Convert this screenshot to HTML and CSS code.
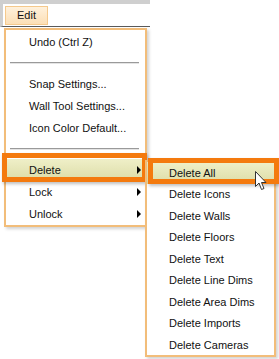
FILE: index.html
```html
<!DOCTYPE html>
<html lang="en">

<head>
    <meta charset="UTF-8">
    <title>Edit menu</title>
    <link rel="stylesheet" href="styles.css">
</head>

<body>
    <div class="screen">
        <div class="menubar">
            <div class="menu-title">Edit</div>
        </div>

        <div class="menu main-menu">
            <div class="item">Undo (Ctrl Z)</div>
            <div class="sep"></div>
            <div class="item">Snap Settings...</div>
            <div class="item">Wall Tool Settings...</div>
            <div class="item">Icon Color Default...</div>
            <div class="sep"></div>
            <div class="item has-sub marked">Delete<span class="arrow"></span></div>
            <div class="item has-sub">Lock<span class="arrow"></span></div>
            <div class="item has-sub">Unlock<span class="arrow"></span></div>
        </div>

        <div class="menu sub-menu">
            <div class="item marked">Delete All</div>
            <div class="item">Delete Icons</div>
            <div class="item">Delete Walls</div>
            <div class="item">Delete Floors</div>
            <div class="item">Delete Text</div>
            <div class="item">Delete Line Dims</div>
            <div class="item">Delete Area Dims</div>
            <div class="item">Delete Imports</div>
            <div class="item">Delete Cameras</div>
        </div>

        <svg class="cursor" width="12" height="20" viewBox="0 0 12 20">
            <path d="M0.5 0.5 L0.5 15.5 L4 12 L6.5 18.5 L9 17.5 L6.5 11.5 L11 11.5 Z" fill="#fff" stroke="#333"
                stroke-width="1" />
        </svg>
    </div>
</body>

</html>
```

FILE: styles.css
```css
body {
    margin: 0;
    background: #fff;
    font-family: 'Liberation Sans', Arial, sans-serif;
    font-size: 11px;
    color: #111;
}

.screen {
    position: relative;
    width: 279px;
    height: 359px;
    overflow: hidden;
}

.menubar {
    width: 145px;
    height: 22px;
    border-top: 4px solid #cfcfcf;
    border-left: 3px solid #cfcfcf;
    border-bottom: 1px solid #5a5a5a;
    padding: 2px 0 0 2px;
    box-sizing: content-box;
    height: 20px;
}

.menu-title {
    width: 41px;
    height: 17px;
    border: 1px solid #f5c98c;
    background: linear-gradient(#fff1dc, #fcdfb6);
    padding-left: 11px;
    line-height: 17px;
    box-sizing: content-box;
    width: 30px;
}

.menu {
    position: absolute;
    background: #fff;
    border: 2px solid #f2bd7a;
    box-sizing: border-box;
    box-shadow: 2px 2px 3px rgba(0, 0, 0, 0.18);
}

.main-menu {
    left: 4px;
    top: 28px;
    width: 143px;
    padding-top: 1px;
}

.sub-menu {
    left: 145px;
    top: 160px;
    width: 131px;
    height: 197px;
}

.item {
    position: relative;
    display: flex;
    align-items: center;
    justify-content: space-between;
    height: 22px;
    padding: 0 4px 0 23px;
}

.sub-menu .item {
    height: 21.5px;
    padding-left: 22px;
}

.sep {
    height: 20px;
    display: flex;
    align-items: center;
    padding: 0 6px 0 4px;
}

.sep::before {
    content: "";
    flex: 1;
    height: 1px;
    background: #9a9a9a;
    border-bottom: 1px solid #e4e4e4;
}

.arrow {
    width: 0;
    height: 0;
    border-top: 4px solid transparent;
    border-bottom: 4px solid transparent;
    border-left: 4px solid #000;
}

.marked {
    background: linear-gradient(#efefc8, #dcdca6);
}

.marked::after {
    content: "";
    position: absolute;
    border: 5px solid #f47a0e;
    box-shadow: 1px 2px 3px rgba(0, 0, 0, 0.25);
    pointer-events: none;
}

.main-menu .marked::after {
    left: -4px;
    top: -6px;
    right: -2px;
    bottom: -1px;
}

.sub-menu .marked::after {
    left: 1px;
    top: -4px;
    right: -5px;
    bottom: 0;
}

.cursor {
    position: absolute;
    left: 255px;
    top: 171px;
}
```
